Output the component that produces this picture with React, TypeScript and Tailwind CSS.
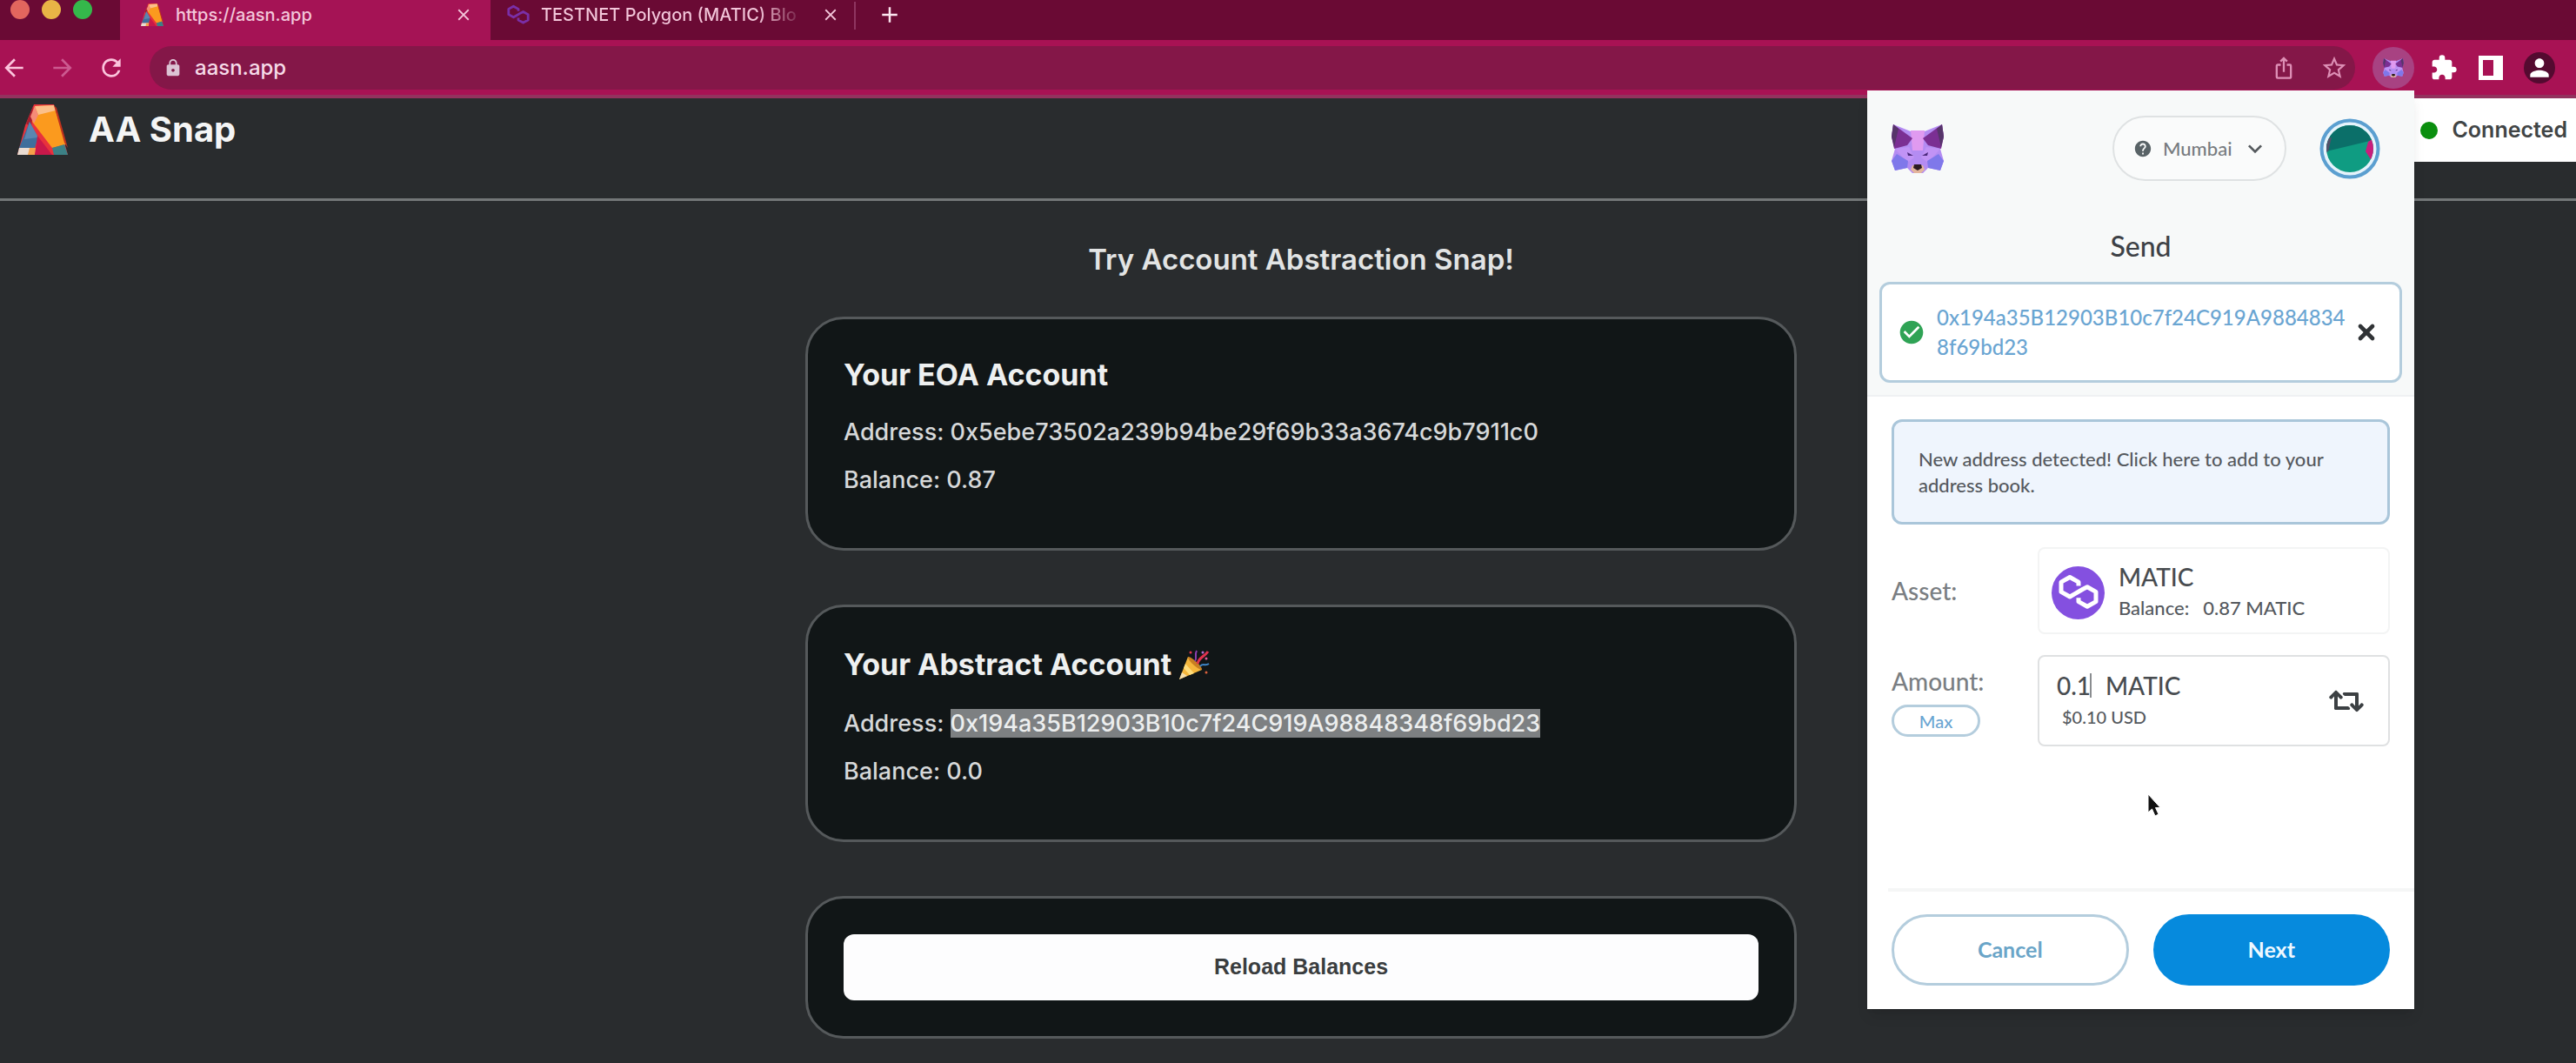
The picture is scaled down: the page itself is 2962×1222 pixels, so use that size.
import React, { useState } from "react";
import {
  MdAdd,
  MdArrowBack,
  MdArrowForward,
  MdCheckCircle,
  MdClose,
  MdExtension,
  MdHelp,
  MdIosShare,
  MdKeyboardArrowDown,
  MdLock,
  MdPerson,
  MdRefresh,
  MdStarBorder,
} from "react-icons/md";
import { FaRetweet } from "react-icons/fa";
import { X } from "lucide-react";

// ACCOUNT DATA

interface AccountType {
  heading: string;
  address: string;
  balance: string;
  selected?: boolean;
}

const accounts: AccountType[] = [
  {
    heading: "Your EOA Account",
    address: "0x5ebe73502a239b94be29f69b33a3674c9b7911c0",
    balance: "0.87",
  },
  {
    heading: "Your Abstract Account",
    address: "0x194a35B12903B10c7f24C919A98848348f69bd23",
    balance: "0.0",
    selected: true,
  },
];

// DRAWINGS

const SnapLogo = ({ className }: { className: string }) => (
  <svg viewBox="0 0 58 58" className={className} aria-hidden="true">
    <path d="M19 0 H42 L58 58 H0 L9 24 Z" fill="#e8323c" />
    <path d="M18 2 L10 22 L16 26 Z" fill="#a81f2e" />
    <path d="M14 20 L24 38 L20 50 L2 50 Z" fill="#3f6f9c" />
    <path d="M14 20 L24 38 L8 40 Z" fill="#5b86b0" />
    <path d="M0 58 L2 50 H20 L18 58 Z" fill="#e9dcd2" />
    <path d="M14 50 H22 L20 58 H12 Z" fill="#f5a04a" />
    <path d="M23 36 L40 58 H20 Z" fill="#c8184a" />
    <path d="M20 2 L42 1 L56 46 L40 50 L17 20 Z" fill="#fb9a1e" />
    <path d="M20 2 L42 1 L44 7 L24 12 Z" fill="#fbc08a" />
    <path d="M20 2 L24 12 L19 22 L15 14 Z" fill="#f58b78" />
    <path d="M40 50 L54 46 L58 58 H42 Z" fill="#3c8186" />
    <path d="M42 1 L45 4 L58 50 L54 44 Z" fill="#c0321e" />
  </svg>
);

const PolygonMark = ({ className }: { className: string }) => (
  <svg
    viewBox="0 0 40 40"
    className={className}
    fill="none"
    stroke="currentColor"
    strokeWidth="4"
    strokeLinejoin="round"
    aria-hidden="true"
  >
    <path d="M20 14 V10.500 L12 6 L4 10.500 V19.500 L12 24 L16 21.700 L24 17 L28 15 L36 19.500 V28.500 L28 33 L20 28.500 V25" />
  </svg>
);

const Fox = ({ className }: { className: string }) => (
  <svg viewBox="0 0 60 56" className={className} aria-hidden="true">
    <path d="M2 0 L22 8 H38 L58 0 L60 14 L56 28 L60 42 L56 53 L42 50 L36 56 H24 L18 50 L4 53 L0 42 L4 28 L0 14 Z" fill="#b48cf2" />
    <path d="M22 7 H38 L36 30 H24 Z" fill="#e09af0" />
    <path d="M2 0 L24 16 L18 24 L3 28 L0 14 Z" fill="#7b2f93" />
    <path d="M58 0 L36 16 L42 24 L57 28 L60 14 Z" fill="#7b2f93" />
    <path d="M2 0 L8 5 L3 26 L0 14 Z" fill="#56356a" />
    <path d="M58 0 L52 5 L57 26 L60 14 Z" fill="#56356a" />
    <path d="M4 28 L20 26 L26 38 L18 44 Z" fill="#c193f5" />
    <path d="M56 28 L40 26 L34 38 L42 44 Z" fill="#c193f5" />
    <path d="M0 42 L6 34 L19 42 L18 50 L4 53 Z" fill="#7f78ea" />
    <path d="M60 42 L54 34 L41 42 L42 50 L56 53 Z" fill="#7f78ea" />
    <path d="M18 32 L25 36 L19 36 Z" fill="#4b2a7c" />
    <path d="M42 32 L35 36 L41 36 Z" fill="#4b2a7c" />
    <path d="M24 47 H36 L38 52 L34 56 H26 L22 52 Z" fill="#e3b59c" />
    <path d="M26 46 H34 L35 50 L30 53 L25 50 Z" fill="#2c1b22" />
  </svg>
);

const PartyPopper = () => (
  <svg viewBox="0 0 36 36" className="size-9" role="img" aria-label="party popper">
    <path d="M1 35 L11 9 L27 24 Z" fill="#f4b63c" />
    <path d="M1 35 L4 27 L10 31 Z" fill="#f7dfae" />
    <path d="M8 17 L18 28 L13 30 L6 22 Z" fill="#ffdc7a" />
    <path d="M11 9 C14 8 28 20 27 24 C24 25 10 13 11 9 Z" fill="#c87f22" />
    <path d="M19 14 C22 11 18 7 21 2" stroke="#8a3fae" strokeWidth="2" fill="none" />
    <path d="M22 17 C24 9 29 10 34 3" stroke="#e1324f" strokeWidth="3" fill="none" />
    <path d="M25 20 C28 16 31 20 35 17" stroke="#3e86c8" strokeWidth="2" fill="none" />
    <circle cx="14" cy="4" r="1.500" fill="#e1324f" />
    <circle cx="28" cy="4" r="1.500" fill="#b06fd0" />
    <circle cx="32" cy="11" r="1.500" fill="#e05a9c" />
    <circle cx="32" cy="27" r="1.500" fill="#d9603c" />
  </svg>
);

// BROWSER

const BrowserBar = () => (
  <header className="text-[#f3c6da]">
    <div className="flex h-[46px] bg-[#6a0a34]">
      <div className="flex h-[22px] w-[138px] shrink-0 items-center gap-[14px] pl-3">
        <span className="size-[22px] rounded-full bg-[#e2665e]" />
        <span className="size-[22px] rounded-full bg-[#e8b446]" />
        <span className="size-[22px] rounded-full bg-[#35b84b]" />
      </div>
      <div className="flex w-[426px] shrink-0 items-center bg-[#a51355] pr-5 pb-3 pl-6">
        <SnapLogo className="size-[26px]" />
        <span className="ml-[14px] grow text-[20px] font-medium">https://aasn.app</span>
        <button aria-label="Close tab">
          <MdClose className="size-[22px]" />
        </button>
      </div>
      <div className="flex w-[418px] shrink-0 items-center pr-4 pb-3 pl-[18px]">
        <PolygonMark className="size-7 text-[#7a2fa8]" />
        <span className="ml-3 bg-linear-to-r from-[#f3c6da] from-85% to-[#7d2a50] bg-clip-text text-[20px] font-medium whitespace-nowrap text-transparent">
          TESTNET Polygon (MATIC) Blo
        </span>
        <button aria-label="Close tab" className="ml-auto">
          <MdClose className="size-[22px]" />
        </button>
      </div>
      <span className="mt-[2px] h-8 w-[2px] bg-[#8f3560]" />
      <button aria-label="New tab" className="mb-3 ml-6">
        <MdAdd className="size-[30px] text-[#fbe6ef]" />
      </button>
    </div>
    <div className="flex h-[67px] items-center border-b-4 border-[#93325e] bg-[#a81254]">
      <button aria-label="Back">
        <MdArrowBack className="size-8 text-[#fbc4dc]" />
      </button>
      <button aria-label="Forward" className="ml-6">
        <MdArrowForward className="size-8 text-[#cc5a90]" />
      </button>
      <button aria-label="Reload" className="ml-6">
        <MdRefresh className="size-8 text-[#fbc4dc]" />
      </button>
      <div className="ml-7 flex h-[50px] grow items-center rounded-full bg-[#841748] pr-2 pl-4">
        <MdLock className="size-[22px] text-[#dcc3d4]" />
        <input
          aria-label="Address bar"
          defaultValue="aasn.app"
          className="ml-[14px] grow bg-transparent text-[24px] font-medium text-[#f6dbe8] outline-none"
        />
        <button aria-label="Share">
          <MdIosShare className="size-7 text-[#dd8fb5]" />
        </button>
        <button aria-label="Bookmark" className="ml-7">
          <MdStarBorder className="size-8 text-[#dd8fb5]" />
        </button>
      </div>
      <div className="ml-5 flex w-[234px] shrink-0 items-center">
        <button
          aria-label="MetaMask"
          className="flex size-12 items-center justify-center rounded-full bg-[#a84282]"
        >
          <Fox className="h-[22px] w-7" />
        </button>
        <button aria-label="Extensions" className="ml-[18px]">
          <MdExtension className="size-8 text-white" />
        </button>
        <button aria-label="Side panel" className="ml-6">
          <svg viewBox="0 0 28 28" className="size-7">
            <rect x="2.500" y="2.500" width="23" height="23" fill="none" stroke="#fff" strokeWidth="5" />
            <rect x="17" y="2" width="9" height="24" fill="#fff" />
          </svg>
        </button>
        <button
          aria-label="Profile"
          className="ml-6 flex size-9 items-center justify-center rounded-full bg-[#540a30]"
        >
          <MdPerson className="size-8 text-white" />
        </button>
      </div>
    </div>
  </header>
);

// PAGE

const AccountCard = ({ heading, address, balance, selected }: AccountType) => (
  <section className="rounded-[44px] border-[3px] border-[#55595b] bg-[#111617] px-[41px] pt-[42px] pb-[60px] text-[27px] leading-9 font-medium text-[#d6d8d9]">
    {selected ? (
      <h3 className="flex items-center gap-2 text-[34px] leading-[48px] font-bold text-[#eef0f0]">
        {heading} <PartyPopper />
      </h3>
    ) : (
      <h3 className="text-[34px] leading-[44px] font-bold text-[#eef0f0]">{heading}</h3>
    )}
    <p className="mt-[26px]">
      Address:{" "}
      <span className={selected ? "bg-[#7d8082] text-[#eceeee]" : ""}>{address}</span>
    </p>
    <p className="mt-[19px]">Balance: {balance}</p>
  </section>
);

const SnapPage = () => (
  <div className="grow">
    <div className="flex h-[118px] items-start justify-between border-b-[3px] border-[#737778]">
      <div className="flex items-center gap-6 pt-[7px] pl-5">
        <SnapLogo className="size-[58px]" />
        <h1 className="text-[40px] leading-[58px] font-bold text-[#f4f5f5]">AA Snap</h1>
      </div>
      <div className="flex h-[73px] items-center gap-4 bg-white pr-[10px] pl-8 text-[#414546]">
        <span className="size-5 rounded-full bg-[#0b8f0f]" />
        <span className="text-[25px] font-semibold">Connected</span>
      </div>
    </div>
    <main className="mx-auto flex w-full max-w-[1170px] flex-col pt-[45px] pl-[30px]">
      <h2 className="text-center text-[33px] leading-[44px] font-semibold text-[#e2e4e4]">
        Try Account Abstraction Snap!
      </h2>
      <div className="mt-[44px] flex flex-col gap-[62px]">
        {accounts.map((items, i) => (
          <AccountCard key={i} {...items} />
        ))}
        <section className="rounded-[44px] border-[3px] border-[#55595b] bg-[#111617] p-[41px]">
          <button className="h-[76px] w-full rounded-xl bg-[#fdfdfe] font-['Liberation_Sans',sans-serif] text-[25px] font-bold text-[#3a3d3f]">
            Reload Balances
          </button>
        </section>
      </div>
    </main>
  </div>
);

// WALLET POPUP

const Avatar = () => (
  <svg viewBox="0 0 70 70" className="size-[70px]">
    <defs>
      <clipPath id="avatar">
        <circle cx="35" cy="35" r="27" />
      </clipPath>
    </defs>
    <circle cx="35" cy="35" r="32.500" fill="#e6f3fb" stroke="#5b9fd0" strokeWidth="4" />
    <g clipPath="url(#avatar)">
      <rect width="70" height="70" fill="#0f9c82" />
      <path d="M0 0 H70 V23 L0 40 Z" fill="#0b6f69" />
      <path d="M70 18 L56 27 L53 38 L62 52 L70 52 Z" fill="#c81e7c" />
      <path d="M0 26 L14 22 L10 38 L0 44 Z" fill="#54506a" />
    </g>
  </svg>
);

const WalletPopup = () => {
  const [amount, setAmount] = useState("0.1");

  return (
    <aside className="absolute top-[104px] right-[186px] flex min-h-[1056px] w-[629px] flex-col bg-white font-['Lato',sans-serif] font-medium text-[#55595e] shadow-lg">
      <div className="border-b-2 border-[#eff1f3] bg-[#f7f9f9] px-[14px] pt-[29px] pb-[14px]">
        <div className="flex items-center pr-[25px] pl-[14px]">
          <Fox className="h-14 w-[60px]" />
          <label className="ml-auto flex h-[75px] w-[200px] items-center rounded-full border-2 border-[#dfe2e3] bg-[#fafbfb] pl-[22px]">
            <MdHelp className="size-[22px] text-[#596367]" />
            <select
              aria-label="Network"
              className="ml-3 w-[90px] appearance-none bg-transparent text-[22px] text-[#777b7f] outline-none"
            >
              <option>Mumbai</option>
            </select>
            <MdKeyboardArrowDown className="size-8 text-[#54585c]" />
          </label>
          <button aria-label="Account menu" className="ml-[38px]">
            <Avatar />
          </button>
        </div>
        <h2 className="mt-[57px] text-center text-[32px] leading-9 text-[#3d4146]">Send</h2>
        <div className="mt-[23px] flex h-[116px] items-center rounded-xl border-[3px] border-[#b4cddd] bg-white pr-6 pl-[18px]">
          <MdCheckCircle className="size-8 shrink-0 text-[#2fa355]" />
          <p className="ml-[13px] w-[474px] text-[24px] leading-[34px] break-all text-[#6aa5d2]">
            0x194a35B12903B10c7f24C919A98848348f69bd23
          </p>
          <button aria-label="Clear recipient" className="ml-auto">
            <X className="size-7 text-[#303336]" strokeWidth={4} />
          </button>
        </div>
      </div>

      <div className="flex flex-col px-7 pt-[26px]">
        <button className="h-[121px] rounded-xl border-[3px] border-[#aac6da] bg-[#eff5fd] px-7 text-left text-[22px] leading-[30px]">
          New address detected! Click here to add to your address book.
        </button>

        <div className="mt-[26px] flex items-center">
          <span className="w-[168px] text-[28px] text-[#7a7e82]">Asset:</span>
          <button className="flex h-[100px] grow items-center rounded-lg border-2 border-[#f3f4f4] pt-1 pl-[14px] text-left">
            <span className="flex size-[61px] items-center justify-center rounded-full bg-[#8450e0] text-white">
              <PolygonMark className="size-[50px]" />
            </span>
            <span className="ml-4">
              <span className="block text-[28px] leading-9 text-[#484c50]">MATIC</span>
              <span className="flex gap-4 text-[22px] leading-9">
                <span>Balance:</span>
                <span>0.87 MATIC</span>
              </span>
            </span>
          </button>
        </div>

        <div className="mt-6 flex">
          <div className="flex w-[168px] flex-col items-start pt-3">
            <label htmlFor="amount" className="text-[28px] leading-9 text-[#7a7e82]">
              Amount:
            </label>
            <button className="mt-[9px] h-[37px] w-[102px] rounded-full border-[3px] border-[#b4cddd] text-[20px] leading-[30px] text-[#6aa5d2]">
              Max
            </button>
          </div>
          <div className="flex h-[105px] grow items-center justify-between rounded-lg border-2 border-[#dfe1e2] pr-7 pl-5">
            <div>
              <div className="flex items-center text-[28px] leading-9 text-[#484c50]">
                <input
                  id="amount"
                  value={amount}
                  onChange={(e) => setAmount(e.target.value)}
                  className="w-[38px] bg-transparent outline-none"
                />
                <span className="h-7 w-[2px] bg-[#8a8d90]" />
                <span className="ml-4">MATIC</span>
              </div>
              <p className="pl-[6px] text-[20px] leading-9">$0.10 USD</p>
            </div>
            <button aria-label="Switch currency">
              <FaRetweet className="size-10 text-[#3c4043]" />
            </button>
          </div>
        </div>
      </div>

      <div className="mt-auto ml-6 border-t-4 border-[#f5f6f6] pt-[26px] pr-7 pb-[27px] pl-1">
        <div className="grid grid-cols-2 gap-7 text-[25px] font-bold">
          <button className="h-[82px] rounded-full border-[3px] border-[#b4cddd] text-[#6aa5c8]">
            Cancel
          </button>
          <button className="h-[82px] rounded-full bg-[#068add] text-[#eef8ff]">Next</button>
        </div>
      </div>

      <svg viewBox="0 0 18 28" className="absolute top-[808px] left-[321px] h-7 w-[18px]" aria-hidden="true">
        <path d="M2 1 V22 L6.500 18 L10 26 L14 24 L10.500 16.500 H16 Z" fill="#111" stroke="#fff" />
      </svg>
    </aside>
  );
};

export default function App() {
  return (
    <div className="relative flex min-h-screen flex-col overflow-hidden bg-[#292c2e] font-['Inter',sans-serif]">
      <BrowserBar />
      <SnapPage />
      <WalletPopup />
    </div>
  );
}
